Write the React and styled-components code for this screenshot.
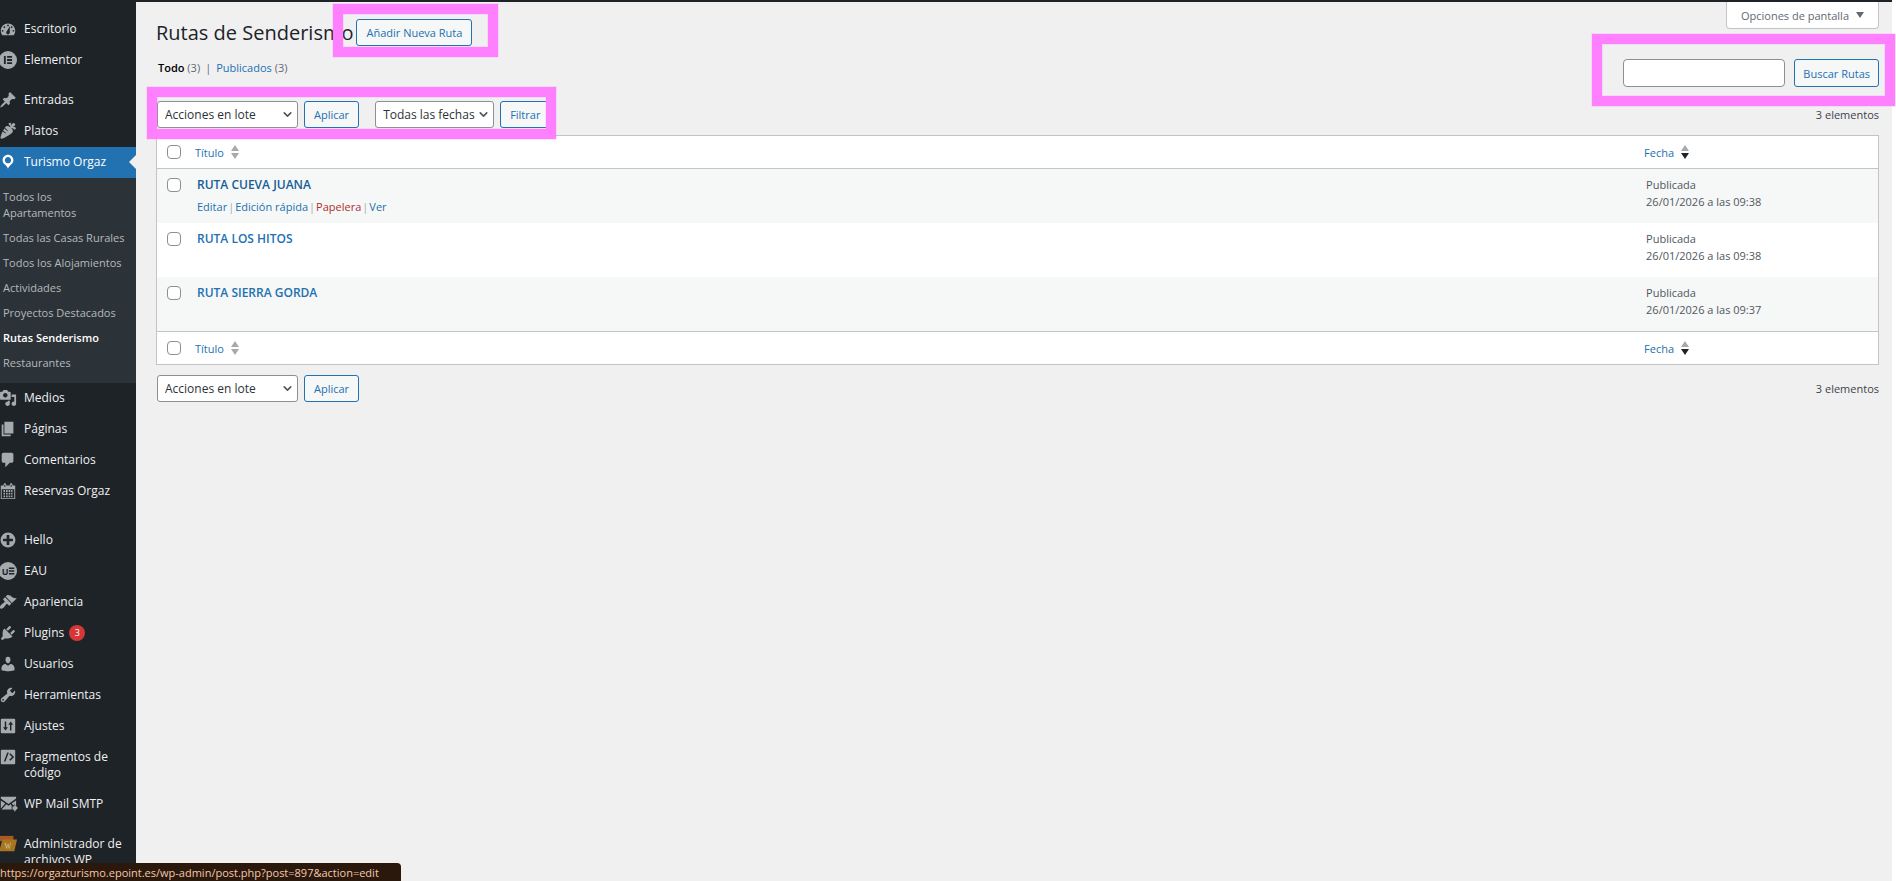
import React from 'react'
import styled, { createGlobalStyle, css } from 'styled-components'
import { ChevronDown } from 'lucide-react'

const GlobalStyle = createGlobalStyle`
  *, *::before, *::after {
    box-sizing: border-box;
  }
  body {
    margin: 0;
    background: #fff;
    color: #3c434a;
    font-family: "Open Sans", "Noto Sans", sans-serif;
    font-size: 11px;
    line-height: 17px;
  }
  button, input, select {
    font-family: inherit;
  }
  a {
    color: #2271b1;
    text-decoration: none;
  }
`

const Page = styled.div`
  display: flex;
  flex-direction: column;
  min-height: 100vh;
  padding-right: 4px;
`

const TopBar = styled.div`
  height: 2px;
  background: #1d2327;
`

const Body = styled.div`
  flex: 1;
  display: flex;
  background: #f0f0f1;
`

/* ---------- sidebar ---------- */

const Sidebar = styled.nav`
  flex: none;
  width: 136px;
  padding-top: 12px;
  background: #1d2327;
`

const MenuList = styled.ul`
  list-style: none;
  margin: 0;
  padding: 0;
`

const MenuItem = styled.li`
  margin-top: ${(p) => p.$gap || 0}px;
`

const MenuLink = styled.a`
  position: relative;
  display: flex;
  gap: 7px;
  padding: 7px 4px 8px 0;
  color: #f0f0f1;
  font-size: 12px;
  line-height: 16px;

  svg {
    flex: none;
    width: 18px;
    height: 18px;
    margin: -1px 0 -1px -1px;
    fill: #a7aaad;
  }

  ${(p) =>
    p.$active &&
    css`
      background: #2271b1;
      color: #fff;

      svg {
        fill: #fff;
      }
      &::after {
        content: '';
        position: absolute;
        right: 0;
        top: 8px;
        border: 7px solid transparent;
        border-left-width: 0;
        border-right-color: #f0f0f1;
      }
    `}
`

const Count = styled.span`
  display: inline-block;
  width: 16px;
  height: 16px;
  margin-left: 5px;
  border-radius: 8px;
  background: #d63638;
  color: #fff;
  font-size: 9px;
  line-height: 16px;
  text-align: center;
  vertical-align: top;
`

const SubMenu = styled(MenuList)`
  padding: 6px 0 8px;
  background: #2c3338;
`

const SubLink = styled.a`
  display: block;
  padding: 5px 10px 4px 3px;
  color: ${(p) => (p.$current ? '#fff' : '#b4b9be')};
  font-weight: ${(p) => (p.$current ? 600 : 400)};
  line-height: 16px;
`

/* ---------- content ---------- */

const Main = styled.main`
  flex: 1;
  min-width: 0;
  padding: 0 13px 0 20px;
`

const Header = styled.header`
  display: flex;
  justify-content: space-between;
  align-items: flex-start;
`

const TitleGroup = styled.div`
  display: flex;
  gap: 3px;
  padding-top: 17px;
`

const Title = styled.h1`
  margin: 0;
  color: #1d2327;
  font-size: 20px;
  font-weight: 400;
  line-height: 27px;
`

const ScreenOptions = styled.button`
  display: flex;
  align-items: center;
  gap: 7px;
  height: 27px;
  padding: 0 14px;
  border: 1px solid #c3c4c7;
  border-top: 0;
  border-radius: 0 0 4px 4px;
  background: #fff;
  color: #646970;
  font-size: 11px;

  svg {
    width: 8px;
    height: 6px;
    fill: #646970;
  }
`

const Button = styled.button`
  height: 27px;
  padding: 0 9px;
  border: 1px solid #2271b1;
  border-radius: 3px;
  background: #f6f7f7;
  color: #2271b1;
  font-size: 11px;
  white-space: nowrap;
`

const SearchButton = styled(Button)`
  height: 28px;
  padding: 0 8px;
`

const Marked = styled.div`
  position: relative;
  display: flex;
`

// pink frame drawn over whatever it surrounds
const Marker = styled.span`
  position: absolute;
  z-index: 2;
  inset: ${(p) => p.$inset};
  border: 10px solid #ff80ff;
  box-shadow: 0 0 0 1px rgba(255, 128, 255, 0.2), inset 0 0 0 1px rgba(255, 128, 255, 0.2);
  pointer-events: none;
`

const SubHeader = styled.div`
  display: flex;
  justify-content: space-between;
  align-items: flex-start;
  margin-top: 13px;
`

const Views = styled.ul`
  display: flex;
  gap: 5px;
  list-style: none;
  margin: 0;
  padding: 0 0 0 2px;
  color: #646970;

  li + li::before {
    content: '|';
    margin-right: 5px;
  }
`

const ViewLink = styled.a`
  ${(p) =>
    p.$current &&
    css`
      color: #000;
      font-weight: 600;
    `}
`

const SearchForm = styled(Marked).attrs({ as: 'form', role: 'search' })`
  gap: 9px;
`

const SearchInput = styled.input`
  width: 162px;
  height: 28px;
  padding: 0 7px;
  border: 1px solid #8c8f94;
  border-radius: 4px;
  background: #fff;
`

const TableNav = styled.div`
  display: flex;
  justify-content: space-between;
  align-items: center;
  margin-top: ${(p) => p.$top}px;
`

const Filters = styled(Marked)`
  gap: 16px;
  padding-left: 1px;
`

const FilterGroup = styled.div`
  display: flex;
  gap: 6px;
`

const SelectWrap = styled.span`
  position: relative;
  width: ${(p) => p.$width}px;

  select {
    appearance: none;
    width: 100%;
    height: 27px;
    padding: 0 14px 0 7px;
    border: 1px solid #8c8f94;
    border-radius: 3px;
    background: #fff;
    color: #2c3338;
    font-size: 12px;
  }
  svg {
    position: absolute;
    right: 4px;
    top: 7px;
    color: #50575e;
    pointer-events: none;
  }
`

const Table = styled.table`
  width: 100%;
  margin-top: 7px;
  border: 1px solid #c3c4c7;
  border-spacing: 0;
  table-layout: fixed;
  background: #fff;
  text-align: left;

  th {
    height: 33px;
    padding: 0 7px;
    font-weight: 400;
  }
  thead th {
    border-bottom: 1px solid #c3c4c7;
  }
  tfoot th {
    height: 33px;
    border-top: 1px solid #c3c4c7;
  }
  td {
    height: 54px;
    padding: 7px 9px 0;
    vertical-align: top;
  }
  tbody tr:nth-child(odd) {
    background: #f6f7f7;
  }
`

const CheckCol = styled.col`
  width: 31px;
`

const DateCol = styled.col`
  width: 14%;
`

const Check = styled.input.attrs({ type: 'checkbox' })`
  appearance: none;
  display: block;
  width: 14px;
  height: 14px;
  margin: ${(p) => (p.$head ? '0 0 0 3px' : '2px 0 0 1px')};
  border: 1px solid #8c8f94;
  border-radius: 4px;
  background: #fff;
`

const SortLink = styled.a`
  display: flex;
  align-items: center;
  gap: 7px;

  svg {
    width: 8px;
    height: 14px;
    fill: #a7aaad;
  }
`

const RowTitle = styled.a`
  display: block;
  color: ${(p) => (p.$hover ? '#135e96' : '#2271b1')};
  font-size: 12px;
  font-weight: 600;
`

const RowActions = styled.div`
  display: flex;
  gap: 1px;
  margin-top: 5px;
  color: #a7aaad;
`

const ActionLink = styled.a`
  color: ${(p) => (p.$danger ? '#b32d2e' : '#2271b1')};
`

const DateCell = styled.td`
  color: #50575e;
`

const StatusBar = styled.div`
  position: fixed;
  left: 0;
  bottom: 0;
  z-index: 3;
  padding: 2px 22px 0 0;
  border-radius: 0 4px 0 0;
  background: #2b180d;
  color: #f3c9ab;
  line-height: 16px;
  white-space: nowrap;
`

/* ---------- icons ---------- */

const paths = {
  dashboard:
    'M3.76 17h12.48c1.1-1.37 1.76-3.11 1.76-5 0-4.42-3.58-8-8-8s-8 3.58-8 8c0 1.89.66 3.63 1.76 5zM10 5c.55 0 1 .45 1 1s-.45 1-1 1-1-.45-1-1 .45-1 1-1zM6 7c.55 0 1 .45 1 1s-.45 1-1 1-1-.45-1-1 .45-1 1-1zm8 0c.55 0 1 .45 1 1s-.45 1-1 1-1-.45-1-1 .45-1 1-1zm-5.37 5.55L12 7v7c0 1.1-.9 2-2 2s-2-.9-2-2c0-.57.24-1.08.63-1.45zM4 11c.55 0 1 .45 1 1s-.45 1-1 1-1-.45-1-1 .45-1 1-1zm12 0c.55 0 1 .45 1 1s-.45 1-1 1-1-.45-1-1 .45-1 1-1z',
  elementor:
    'M10 0a10 10 0 1 0 0 20 10 10 0 0 0 0-20zM5.5 5.5h2v9h-2zM9 5.5h5.5v2H9zM9 9h5.5v2H9zM9 12.5h5.5v2H9z',
  post: 'M10.44 3.02l1.82-1.82 6.36 6.35-1.83 1.82c-1.05-.68-2.48-.57-3.41.36l-.75.75c-.92.93-1.04 2.35-.35 3.41l-1.83 1.82-2.41-2.41-2.8 2.79c-.42.42-3.38 2.71-3.8 2.29s1.86-3.39 2.28-3.81l2.79-2.79L4.1 9.36l1.83-1.82c1.05.69 2.48.57 3.4-.36l.75-.75c.93-.92 1.05-2.35.36-3.41z',
  carrot:
    'M2 18.43c1.51 1.36 11.64-4.64 13.14-7.21.72-1.22-.13-3.01-1.52-4.44C15.2 5.73 16.59 9 17.91 8.31c.6-.32.99-1.31.7-1.92-.52-1.08-2.25-1.08-3.42-1.21.83-.2 2.82-1.05 2.86-2.25.04-.92-1.13-1.97-2.05-1.86-1.21.14-1.65 1.88-2.06 3-.05-.71-.2-2.27-.98-2.95-1.04-.91-2.29-.05-2.32 1.05-.04 1.33 2.82 2.07 1.92 3.67C11.04 4.67 9.25 4.03 8.1 4.7c-.49.31-1.05.91-1.63 1.69.89.94 2.12 2.07 3.09 2.72.2.14.26.42.11.62-.14.21-.42.26-.62.12-.99-.67-2.2-1.78-3.1-2.71-.45.67-.91 1.43-1.34 2.23.85.86 1.93 1.83 2.79 2.41.2.14.25.42.11.62-.14.21-.42.26-.63.12-.85-.58-1.86-1.48-2.71-2.32C2.4 13.69 1.1 17.63 2 18.43z',
  location:
    'M10 2C6.69 2 4 4.69 4 8c0 2.02 1.17 3.71 2.53 4.89.43.37 1.18.96 1.85 1.83.74.97 1.41 2.01 1.62 2.71.21-.7.88-1.74 1.62-2.71.67-.87 1.42-1.46 1.85-1.83C14.83 11.71 16 10.02 16 8c0-3.31-2.69-6-6-6zm0 2.56c1.9 0 3.44 1.54 3.44 3.44S11.9 11.44 10 11.44 6.56 9.9 6.56 8 8.1 4.56 10 4.56z',
  media:
    'M13 11V4c0-.55-.45-1-1-1h-1.67L9 1H5L3.67 3H2c-.55 0-1 .45-1 1v7c0 .55.45 1 1 1h10c.55 0 1-.45 1-1zM7 4.5c1.38 0 2.5 1.12 2.5 2.5S8.38 9.5 7 9.5 4.5 8.38 4.5 7 5.62 4.5 7 4.5zM14 6h5v10.5c0 1.38-1.12 2.5-2.5 2.5S14 17.88 14 16.5s1.12-2.5 2.5-2.5c.17 0 .34.02.5.05V9h-3V6zm-4 8.05V13h2v3.5c0 1.38-1.12 2.5-2.5 2.5S7 17.88 7 16.5 8.12 14 9.5 14c.17 0 .34.02.5.05z',
  page: 'M6 15V2h10v13H6zm-1 1h8v2H3V5h2v11z',
  comments:
    'M5 2h9c1.1 0 2 .9 2 2v7c0 1.1-.9 2-2 2h-2l-5 5v-5H5c-1.1 0-2-.9-2-2V4c0-1.1.9-2 2-2z',
  calendar:
    'M15 4h3v15H2V4h3V3c0-.83.67-1.5 1.5-1.5S8 2.17 8 3v1h4V3c0-.83.67-1.5 1.5-1.5S15 2.17 15 3v1zM6 3v2.5h1V3zm7 0v2.5h1V3zm4 15V8H3v10zM5 9h1.7v2H5zm2.8 0h1.8v2H7.8zm2.9 0h1.8v2h-1.8zm2.8 0H15v2h-1.5zM5 12h1.7v2H5zm2.8 0h1.8v2H7.8zm2.9 0h1.8v2h-1.8zm2.8 0H15v2h-1.5zM5 15h1.7v2H5zm2.8 0h1.8v2H7.8zm2.9 0h1.8v2h-1.8zm2.8 0H15v2h-1.5z',
  plus: 'M15.8 4.2c3.2 3.21 3.2 8.39 0 11.6-3.21 3.2-8.39 3.2-11.6 0C1 12.59 1 7.41 4.2 4.2 7.41 1 12.59 1 15.8 4.2zm-4.3 11.3v-4h4v-3h-4v-4h-3v4h-4v3h4v4h3z',
  appearance:
    'M14.48 11.06L7.41 3.99l1.5-1.5c.5-.56 2.3-.47 3.51.32 1.21.8 1.43 1.28 2.91 2.1 1.18.64 2.45 1.26 4.45.85zm-.71.71L6.7 4.7 4.93 6.47c-.39.39-.39 1.02 0 1.41l1.06 1.06c.39.39.39 1.03 0 1.42-.6.6-1.43 1.11-2.21 1.69-.35.26-.7.53-1.01.84C1.43 14.23.4 16.08 1.4 17.07c.99 1 2.84-.03 4.18-1.36.31-.31.58-.66.85-1.02.57-.78 1.08-1.61 1.69-2.21.39-.39 1.02-.39 1.41 0l1.06 1.06c.39.39 1.02.39 1.41 0z',
  plugins:
    'M13.11 4.36L9.87 7.6 8 5.73l3.24-3.24c.35-.34 1.05-.2 1.56.32.52.51.66 1.21.31 1.55zm-8 1.77l.91-1.12 9.01 9.01-1.19.84c-.71.71-2.63 1.16-3.82 1.16H6.14L4.9 17.26c-.59.59-1.54.59-2.12 0-.59-.58-.59-1.53 0-2.12l1.24-1.24v-3.88c0-1.13.4-3.19 1.09-3.89zm7.26 3.97l3.24-3.24c.34-.35 1.04-.21 1.55.31.52.51.66 1.21.31 1.55l-3.24 3.25z',
  users:
    'M10 9.25c-2.27 0-2.73-3.44-2.73-3.44C7 4.02 7.82 2 9.97 2c2.16 0 2.98 2.02 2.71 3.81 0 0-.41 3.44-2.68 3.44zm0 2.57L12.72 10c2.39 0 4.52 2.33 4.52 4.53v2.49s-3.65 1.13-7.24 1.13c-3.65 0-7.24-1.13-7.24-1.13v-2.49c0-2.25 1.94-4.48 4.47-4.48z',
  tools:
    'M16.68 9.77c-1.34 1.34-3.3 1.67-4.95.99l-5.41 6.52c-.99.99-2.59.99-3.58 0s-.99-2.59 0-3.57l6.52-5.42c-.68-1.65-.35-3.61.99-4.95 1.28-1.28 3.12-1.62 4.72-1.06l-2.89 2.89 2.82 2.82 2.86-2.87c.53 1.58.18 3.39-1.08 4.65zM3.81 16.21c.4.39 1.04.39 1.43 0 .4-.4.4-1.04 0-1.43-.39-.4-1.03-.4-1.43 0-.39.39-.39 1.03 0 1.43z',
  settings:
    'M3 2h14a1 1 0 0 1 1 1v14a1 1 0 0 1-1 1H3a1 1 0 0 1-1-1V3a1 1 0 0 1 1-1zM6.4 5v6.5H4.5L7.2 15l2.7-3.5H8V5zM12.2 15V8.5h-1.9L13 5l2.7 3.5h-1.9V15z',
  code: 'M3 2h14a1 1 0 0 1 1 1v14a1 1 0 0 1-1 1H3a1 1 0 0 1-1-1V3a1 1 0 0 1 1-1zM9.2 5L5.4 15h1.7l3.8-10zM11.4 6.9l3.1 3.1-3.1 3.1 1.2 1.2 4.2-4.3-4.2-4.3z',
  mail: 'M2 2h17v2l-8.5 6L2 4zM2 6l5 3.5L2 15zM19 6v5.5h-3l-2-2zM8.2 10.4l2.3 1.6 2.3-1.6 1.2 1.2V16H2.8zM15 12.8h2V10l4 4.5-4 4.5v-2.7h-2z',
}

const Icon = ({ name }) => {
  if (name === 'eau') {
    return (
      <svg viewBox="0 0 20 20" aria-hidden="true">
        <circle cx="10" cy="10" r="10" />
        <path d="M11 6.2h6v1.6h-6zM11 9.2h6v1.6h-6zM11 12.2h6v1.6h-6z" style={{ fill: '#1d2327' }} />
        <text x="3" y="14" fontSize="10" fontWeight="700" style={{ fill: '#1d2327' }}>U</text>
      </svg>
    )
  }
  if (name === 'folder') {
    return (
      <svg viewBox="0 0 20 20" aria-hidden="true" overflow="visible">
        <path d="M0 1h16v6H0z" style={{ fill: '#a85a24' }} />
        <path d="M4 5h16l-3 13H0z" style={{ fill: '#a8761f' }} />
        <text x="6" y="15" fontSize="8" fontFamily="Liberation Serif" style={{ fill: '#d8c9a6' }}>W</text>
      </svg>
    )
  }
  return (
    <svg viewBox="0 0 20 20" aria-hidden="true" overflow="visible">
      <path d={paths[name]} fillRule="evenodd" />
    </svg>
  )
}

/* ---------- data ---------- */

const subItems = [
  'Todos los Apartamentos',
  'Todas las Casas Rurales',
  'Todos los Alojamientos',
  'Actividades',
  'Proyectos Destacados',
  'Rutas Senderismo',
  'Restaurantes',
]

const menu = [
  { label: 'Escritorio', icon: 'dashboard' },
  { label: 'Elementor', icon: 'elementor' },
  { label: 'Entradas', icon: 'post', gap: 9 },
  { label: 'Platos', icon: 'carrot' },
  { label: 'Turismo Orgaz', icon: 'location', items: subItems },
  { label: 'Medios', icon: 'media' },
  { label: 'Páginas', icon: 'page' },
  { label: 'Comentarios', icon: 'comments' },
  { label: 'Reservas Orgaz', icon: 'calendar' },
  { label: 'Hello', icon: 'plus', gap: 18 },
  { label: 'EAU', icon: 'eau' },
  { label: 'Apariencia', icon: 'appearance' },
  { label: 'Plugins', icon: 'plugins', count: 3 },
  { label: 'Usuarios', icon: 'users' },
  { label: 'Herramientas', icon: 'tools' },
  { label: 'Ajustes', icon: 'settings' },
  { label: 'Fragmentos de código', icon: 'code' },
  { label: 'WP Mail SMTP', icon: 'mail' },
  { label: 'Administrador de archivos WP', icon: 'folder', gap: 9 },
]

const rutas = [
  { title: 'RUTA CUEVA JUANA', date: '26/01/2026 a las 09:38', hover: true },
  { title: 'RUTA LOS HITOS', date: '26/01/2026 a las 09:38' },
  { title: 'RUTA SIERRA GORDA', date: '26/01/2026 a las 09:37' },
]

const Select = ({ label, width }) => (
  <SelectWrap $width={width}>
    <select aria-label={label}>
      <option>{label}</option>
    </select>
    <ChevronDown size={13} strokeWidth={3} />
  </SelectWrap>
)

const HeadRow = () => (
  <tr>
    <th>
      <Check $head aria-label="Seleccionar todo" />
    </th>
    <th>
      <SortLink href="#titulo">
        Título
        <svg viewBox="0 0 8 14">
          <path d="M0 6l4-6 4 6zM0 8l4 6 4-6z" />
        </svg>
      </SortLink>
    </th>
    <th>
      <SortLink href="#fecha">
        Fecha
        <svg viewBox="0 0 8 14">
          <path d="M0 6l4-6 4 6z" />
          <path d="M0 8l4 6 4-6z" style={{ fill: '#1d2327' }} />
        </svg>
      </SortLink>
    </th>
  </tr>
)

export default function App() {
  return (
    <>
      <GlobalStyle />
      <Page>
        <TopBar />
        <Body>
          <Sidebar>
            <MenuList>
              {menu.map((item) => (
                <MenuItem key={item.label} $gap={item.gap}>
                  <MenuLink href="#" $active={!!item.items}>
                    <Icon name={item.icon} />
                    <span>
                      {item.label}
                      {item.count && <Count>{item.count}</Count>}
                    </span>
                  </MenuLink>
                  {item.items && (
                    <SubMenu>
                      {item.items.map((sub) => (
                        <li key={sub}>
                          <SubLink href="#" $current={sub === 'Rutas Senderismo'}>
                            {sub}
                          </SubLink>
                        </li>
                      ))}
                    </SubMenu>
                  )}
                </MenuItem>
              ))}
            </MenuList>
          </Sidebar>

          <Main>
            <Header>
              <TitleGroup>
                <Title>Rutas de Senderismo</Title>
                <Marked>
                  <Button>Añadir Nueva Ruta</Button>
                  <Marker $inset="-15px -26px -11px -23px" />
                </Marked>
              </TitleGroup>
              <ScreenOptions>
                Opciones de pantalla
                <svg viewBox="0 0 8 6">
                  <path d="M0 0h8L4 6z" />
                </svg>
              </ScreenOptions>
            </Header>

            <SubHeader>
              <Views>
                <li>
                  <ViewLink href="#" $current>Todo</ViewLink> (3)
                </li>
                <li>
                  <ViewLink href="#">Publicados</ViewLink> (3)
                </li>
              </Views>
              <SearchForm>
                <SearchInput type="search" aria-label="Buscar Rutas" />
                <SearchButton type="button">Buscar Rutas</SearchButton>
                <Marker $inset="-25px -16px -19px -31px" />
              </SearchForm>
            </SubHeader>

            <TableNav $top={14}>
              <Filters>
                <FilterGroup>
                  <Select label="Acciones en lote" width={141} />
                  <Button>Aplicar</Button>
                </FilterGroup>
                <FilterGroup>
                  <Select label="Todas las fechas" width={119} />
                  <Button>Filtrar</Button>
                </FilterGroup>
                <Marker $inset="-14px -6px -11px -9px" />
              </Filters>
              <span>3 elementos</span>
            </TableNav>

            <Table>
              <colgroup>
                <CheckCol />
                <col />
                <DateCol />
              </colgroup>
              <thead>
                <HeadRow />
              </thead>
              <tbody>
                {rutas.map((ruta) => (
                  <tr key={ruta.title}>
                    <td>
                      <Check aria-label={ruta.title} />
                    </td>
                    <td>
                      <RowTitle href="#" $hover={ruta.hover}>{ruta.title}</RowTitle>
                      {ruta.hover && (
                        <RowActions>
                          <ActionLink href="#">Editar</ActionLink>|
                          <ActionLink href="#">Edición rápida</ActionLink>|
                          <ActionLink href="#" $danger>Papelera</ActionLink>|
                          <ActionLink href="#">Ver</ActionLink>
                        </RowActions>
                      )}
                    </td>
                    <DateCell>
                      Publicada
                      <br />
                      {ruta.date}
                    </DateCell>
                  </tr>
                ))}
              </tbody>
              <tfoot>
                <HeadRow />
              </tfoot>
            </Table>

            <TableNav $top={10}>
              <Filters>
                <FilterGroup>
                  <Select label="Acciones en lote" width={141} />
                  <Button>Aplicar</Button>
                </FilterGroup>
              </Filters>
              <span>3 elementos</span>
            </TableNav>
          </Main>
        </Body>
        <StatusBar>https://orgazturismo.epoint.es/wp-admin/post.php?post=897&amp;action=edit</StatusBar>
      </Page>
    </>
  )
}
